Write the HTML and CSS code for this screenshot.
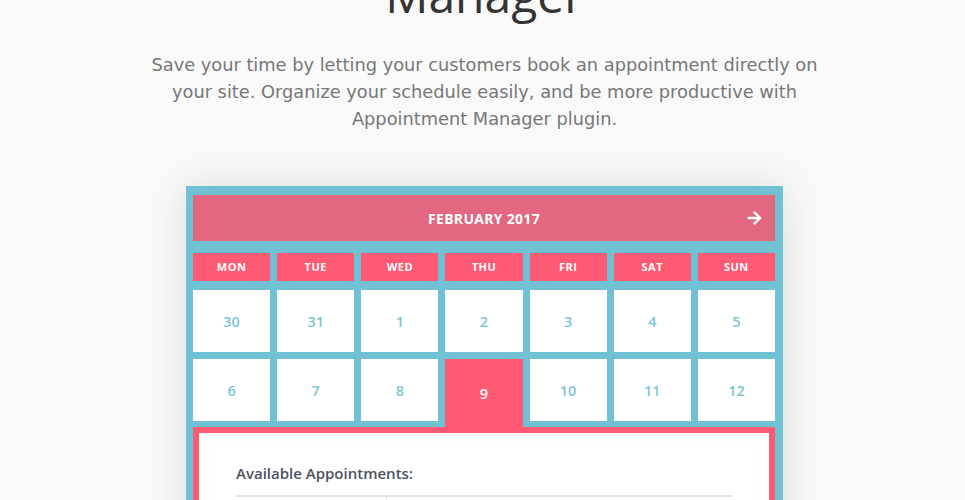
FILE: index.html
```html
<!DOCTYPE html>
<html lang="en">
<head>
    <meta charset="UTF-8">
    <meta name="viewport" content="width=device-width, initial-scale=1.0">
    <title>Appointment Manager</title>
    <link rel="stylesheet" href="styles.css">
</head>
<body>
    <div class="page">
        <section class="intro">
            <h2 class="intro-title">Manager</h2>
            <p class="intro-text">Save your time by letting your customers book an appointment directly on your site. Organize your schedule easily, and be more productive with Appointment Manager plugin.</p>
        </section>

        <div class="calendar">
            <div class="calendar-head">
                <span></span>
                <span class="month">February 2017</span>
                <a href="#" class="next" aria-label="Next month">
                    <svg width="15" height="16" viewBox="0 0 448 512" fill="#fff"><path d="M190.5 66.9l22.2-22.2c9.4-9.4 24.6-9.4 33.9 0L441 239c9.4 9.4 9.4 24.6 0 33.9L246.6 467.3c-9.4 9.4-24.6 9.4-33.9 0l-22.2-22.2c-9.5-9.5-9.3-25 .4-34.3L311.4 296H24c-13.3 0-24-10.7-24-24v-32c0-13.3 10.7-24 24-24h287.4L190.9 101.2c-9.8-9.3-10-24.8-.4-34.3z"/></svg>
                </a>
            </div>

            <div class="weekdays">
                <div>Mon</div>
                <div>Tue</div>
                <div>Wed</div>
                <div>Thu</div>
                <div>Fri</div>
                <div>Sat</div>
                <div>Sun</div>
            </div>

            <div class="days">
                <div class="day">30</div>
                <div class="day">31</div>
                <div class="day">1</div>
                <div class="day">2</div>
                <div class="day">3</div>
                <div class="day">4</div>
                <div class="day">5</div>
                <div class="day">6</div>
                <div class="day">7</div>
                <div class="day">8</div>
                <div class="day selected">9</div>
                <div class="day">10</div>
                <div class="day">11</div>
                <div class="day">12</div>
            </div>

            <div class="details">
                <div class="details-inner">
                    <h4>Available Appointments:</h4>
                    <table class="slots">
                        <tr>
                            <td class="time"></td>
                            <td></td>
                        </tr>
                    </table>
                </div>
            </div>
        </div>
    </div>
</body>
</html>
```

FILE: styles.css
```css
:root {
    --blue: #6fc1d3;
    --pink: #ff5a73;
    --pink-dark: #e2677f;
    --date-color: #80c4d8;
}

* {
    box-sizing: border-box;
    margin: 0;
    padding: 0;
}

body {
    font-family: 'Open Sans', 'Liberation Sans', sans-serif;
    background-color: #f9f9f9;
    color: #333;
    overflow: hidden;
}

.page {
    padding-left: 4px;
}

.intro {
    text-align: center;
}

.intro-title {
    font-size: 48px;
    font-weight: 500;
    line-height: 56px;
    color: #333;
    margin-top: -33px;
}

.intro-text {
    max-width: 700px;
    margin: 28px auto 0;
    font-family: 'DejaVu Sans', sans-serif;
    font-size: 17.8px;
    line-height: 27px;
    color: #777;
}

.calendar {
    width: 597px;
    margin: 54px auto 0;
    padding: 9px 8px 0 7px;
    background-color: var(--blue);
    box-shadow: 0 0 40px rgba(0, 0, 0, 0.12);
}

.calendar-head {
    display: grid;
    grid-template-columns: 1fr auto 1fr;
    align-items: center;
    height: 46px;
    padding: 0 13px;
    background-color: var(--pink-dark);
    color: white;
}

.month {
    font-size: 14px;
    font-weight: 700;
    letter-spacing: 0.3px;
    text-transform: uppercase;
}

.next {
    justify-self: end;
    display: flex;
}

.weekdays,
.days {
    display: grid;
    grid-template-columns: repeat(7, 1fr);
    gap: 7px;
}

.weekdays {
    margin-top: 12px;
}

.weekdays div {
    height: 28px;
    line-height: 28px;
    text-align: center;
    background-color: var(--pink);
    color: white;
    font-size: 11px;
    font-weight: 700;
    letter-spacing: 0.5px;
    text-transform: uppercase;
}

.days {
    margin-top: 9px;
    grid-auto-rows: 62px;
}

.day {
    display: flex;
    align-items: center;
    justify-content: center;
    background-color: white;
    color: var(--date-color);
    font-size: 14.5px;
    font-weight: 600;
}

.day.selected {
    background-color: var(--pink);
    color: white;
    margin-bottom: -6px;
}

.details {
    margin-top: 6px;
    border: 6px solid var(--pink);
    background-color: white;
    padding: 11px 11px 0 13px;
}

.details-inner {
    padding: 19px 25px 0 24px;
    box-shadow: 0 0 2px rgba(0, 0, 0, 0.05);
    height: 200px;
}

.details h4 {
    font-size: 15px;
    font-weight: 600;
    color: #4d5262;
    margin-bottom: 12px;
}

.slots {
    width: 100%;
    border-collapse: collapse;
}

.slots td {
    border-top: 2px solid #e2e2e2;
    height: 40px;
}

.slots .time {
    width: 150px;
    border-right: 1px solid #e2e2e2;
}
```
